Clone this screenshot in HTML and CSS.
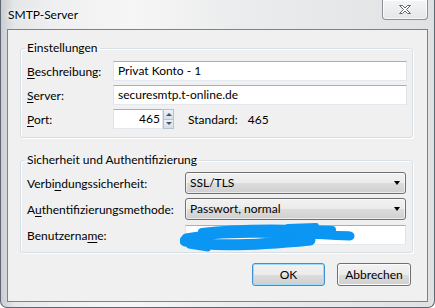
FILE: index.html
```html
<!DOCTYPE html>
<html lang="de">
<head>
<meta charset="utf-8">
<title>SMTP-Server</title>
<link rel="stylesheet" href="styles.css">
</head>
<body>
<div class="window">
  <div class="titlebar">
    <span class="title">SMTP-Server</span>
    <div class="close">
      <svg width="14" height="11" viewBox="0 0 14 11"><path d="M1.5 1.5 H4.5 L7 4 L9.5 1.5 H12.5 L8.5 5.5 L12.5 9.5 H9.5 L7 7 L4.5 9.5 H1.5 L5.5 5.5 Z" fill="#fff" stroke="#5f6770" stroke-width="1" stroke-linejoin="round"/></svg>
    </div>
  </div>
  <div class="client">
    <fieldset class="group g1">
      <legend>Einstellungen</legend>
      <div class="row">
        <span class="lbl l1"><u>B</u>eschreibung:</span>
        <div class="input grow">Privat Konto - 1</div>
      </div>
      <div class="row">
        <span class="lbl l1"><u>S</u>erver:</span>
        <div class="input grow">securesmtp.t-online.de</div>
      </div>
      <div class="row">
        <span class="lbl l1"><u>P</u>ort:</span>
        <div class="input port">465</div>
        <div class="spin">
          <div class="sbtn"><span class="tri up"></span></div>
          <div class="sbtn"><span class="tri down"></span></div>
        </div>
        <span class="std">Standard:</span>
        <span class="stdval">465</span>
      </div>
    </fieldset>
    <fieldset class="group g2">
      <legend>Sicherheit und Authentifizierung</legend>
      <div class="row r2">
        <span class="lbl l2">Verbi<u>n</u>dungssicherheit:</span>
        <div class="select">SSL/TLS<span class="arrow"></span></div>
      </div>
      <div class="row r2">
        <span class="lbl l2">A<u>u</u>thentifizierungsmethode:</span>
        <div class="select">Passwort, normal<span class="arrow"></span></div>
      </div>
      <div class="row r2">
        <span class="lbl l2">Benutzerna<u>m</u>e:</span>
        <div class="input grow user">
          <svg class="scribble" width="180" height="32" viewBox="0 0 180 32">
            <g fill="none" stroke="#0a96f2" stroke-linecap="round" stroke-linejoin="round">
              <path d="M6 16 C40 10 90 10 170 14" stroke-width="9"/>
              <path d="M5 19 C30 25 80 23 130 18" stroke-width="11"/>
              <path d="M22 10 C60 5 110 6 152 8" stroke-width="8"/>
              <path d="M108 5 L136 4" stroke-width="6"/>
              <path d="M9 24 L28 27" stroke-width="5"/>
              <path d="M120 13 L168 13" stroke-width="7"/>
            </g>
          </svg>
        </div>
      </div>
    </fieldset>
    <div class="buttons">
      <div class="btn ok">OK</div>
      <div class="btn">Abbrechen</div>
    </div>
  </div>
</div>
</body>
</html>
```
FILE: styles.css
```css
html, body {
  margin: 0;
  padding: 0;
}
body {
  width: 435px;
  height: 308px;
  overflow: hidden;
  font-family: Lato, "Noto Sans", sans-serif;
  font-size: 12px;
  color: #000;
  background: #ffffff;
}
.window {
  box-sizing: border-box;
  width: 435px;
  height: 308px;
  border: 1px solid #5f6872;
  border-top: 0;
  border-radius: 0 0 7px 7px;
  background: linear-gradient(90deg, #c9cdd1 0, #e4e6e8 3%, #eeeff0 12%, #f6f6f6 30%, #ebeced 55%, #e6e7e9 80%, #dfe1e3 100%);
  display: flex;
  flex-direction: column;
}
.titlebar {
  height: 29px;
  display: flex;
  align-items: flex-start;
  flex: none;
}
.title {
  padding-left: 7px;
  line-height: 29px;
  text-shadow: 0 0 6px #fff, 0 0 3px #fff;
}
.close {
  margin-left: auto;
  margin-right: 6px;
  box-sizing: border-box;
  width: 46px;
  height: 20px;
  border: 1px solid #8c9198;
  border-top: 0;
  border-radius: 0 0 4px 4px;
  background: linear-gradient(#f4f5f6, #e4e6e8);
  box-shadow: inset 0 0 0 1px rgba(255,255,255,0.7);
  display: flex;
  align-items: center;
  justify-content: center;
}
.close svg {
  display: block;
}
.client {
  margin: 0 6px;
  box-sizing: border-box;
  height: 273px;
  border: 1px solid #7a828a;
  background: #f0f0f0;
  display: flex;
  flex-direction: column;
  padding: 0 14px 0 12px;
}
.group {
  margin: 0;
  border: 1px solid #d5dfe5;
  border-radius: 3px;
  box-shadow: inset 1px 1px 0 #fff, 1px 1px 0 #fff;
  padding: 6px 5px 8px 6px;
  min-width: 0;
}
.group legend {
  padding: 0 2px;
  margin-left: -2px;
  line-height: 14px;
}
.g1 {
  margin-top: 11px;
}
.g2 {
  margin-top: 15px;
  padding-top: 5px;
  padding-bottom: 6px;
}
.row {
  display: flex;
  align-items: center;
  height: 20px;
}
.row + .row {
  margin-top: 4px;
}
.row.r2 {
  height: 22px;
}
.lbl {
  flex: none;
}
.lbl u {
  text-decoration-thickness: 1px;
  text-underline-offset: 2px;
}
.l1 {
  width: 86px;
}
.l2 {
  width: 158px;
}
.input {
  position: relative;
  box-sizing: border-box;
  height: 20px;
  border: 1px solid #e2e3ea;
  border-top-color: #abadb3;
  border-bottom-color: #e3e9ef;
  background: #fff;
  padding: 0 4px;
  line-height: 18px;
  white-space: nowrap;
}
.grow {
  flex: 1;
}
.port {
  width: 50px;
  text-align: right;
  padding-right: 2px;
}
.spin {
  width: 11px;
  height: 20px;
  display: flex;
  flex-direction: column;
  flex: none;
}
.sbtn {
  flex: 1;
  box-sizing: border-box;
  border: 1px solid #b9c3cf;
  background: linear-gradient(#eef2f7, #d6dee8);
  display: flex;
  align-items: center;
  justify-content: center;
}
.sbtn + .sbtn {
  border-top: 0;
}
.tri {
  width: 0;
  height: 0;
  border-left: 3px solid transparent;
  border-right: 3px solid transparent;
}
.tri.up {
  border-bottom: 3px solid #44546a;
}
.tri.down {
  border-top: 3px solid #44546a;
}
.std {
  margin-left: 14px;
}
.stdval {
  margin-left: 10px;
}
.select {
  position: relative;
  box-sizing: border-box;
  flex: 1;
  height: 22px;
  margin-right: 1px;
  border: 1px solid #707070;
  border-radius: 3px;
  background: linear-gradient(#f2f2f2 0, #ebebeb 50%, #dddddd 50%, #cfcfcf 100%);
  box-shadow: inset 0 0 0 1px rgba(255,255,255,0.6);
  padding-left: 4px;
  line-height: 20px;
}
.arrow {
  position: absolute;
  right: 5px;
  top: 8px;
  width: 0;
  height: 0;
  border-left: 3.5px solid transparent;
  border-right: 3.5px solid transparent;
  border-top: 4px solid #000;
}
.user {
  margin-right: 1px;
}
.scribble {
  position: absolute;
  left: -6px;
  top: -4px;
}
.buttons {
  margin-top: 10px;
  margin-right: 2px;
  display: flex;
  justify-content: flex-end;
  gap: 12px;
}
.btn {
  box-sizing: border-box;
  width: 74px;
  height: 23px;
  border: 1px solid #707070;
  border-radius: 3px;
  background: linear-gradient(#f2f2f2 0, #ebebeb 50%, #dddddd 50%, #cfcfcf 100%);
  box-shadow: inset 0 0 0 1px #fcfcfc;
  text-align: center;
  line-height: 21px;
}
.btn.ok {
  width: 73px;
  border-color: #3c8fd0;
  box-shadow: inset 0 0 0 1px #9fdcf8;
}
```
